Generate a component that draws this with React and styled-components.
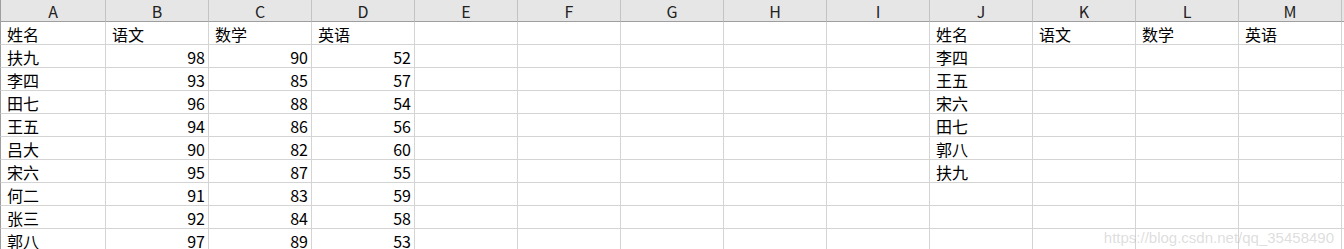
import React from 'react';
import styled, { createGlobalStyle } from 'styled-components';

const GlobalStyle = createGlobalStyle`
  html, body {
    margin: 0;
    padding: 0;
    background: #ffffff;
    overflow: hidden;
  }
  * {
    box-sizing: border-box;
  }
`;

const COLUMNS = ['A', 'B', 'C', 'D', 'E', 'F', 'G', 'H', 'I', 'J', 'K', 'L', 'M', ''];

const scores = [
  ['姓名', '语文', '数学', '英语'],
  ['扶九', 98, 90, 52],
  ['李四', 93, 85, 57],
  ['田七', 96, 88, 54],
  ['王五', 94, 86, 56],
  ['吕大', 90, 82, 60],
  ['宋六', 95, 87, 55],
  ['何二', 91, 83, 59],
  ['张三', 92, 84, 58],
  ['郭八', 97, 89, 53],
];

// lookup table on the right: headers then names to fill in
const lookup = [['姓名', '语文', '数学', '英语'], ['李四'], ['王五'], ['宋六'], ['田七'], ['郭八'], ['扶九']];

const Sheet = styled.div`
  position: relative;
  width: 1344px;
  height: 249px;
  overflow: hidden;
  font-family: 'Noto Sans CJK SC', 'Noto Sans', sans-serif;
  color: #000;
`;

const Grid = styled.div`
  display: grid;
  grid-template-columns: 106px repeat(12, 103px) 1fr;
  grid-auto-rows: 23px;
  grid-template-rows: 22px;
`;

const HeadCell = styled.div`
  display: flex;
  align-items: center;
  justify-content: center;
  background: #e6e6e6;
  border-right: 1px solid #c3c3c3;
  border-bottom: 1px solid #9e9e9e;
  border-left: ${(p) => (p.$first ? '1px solid #9e9e9e' : 'none')};
  font-size: 16px;
  color: #222;
  padding-top: 1px;
`;

const Cell = styled.div`
  display: flex;
  align-items: center;
  justify-content: ${(p) => (p.$num ? 'flex-end' : 'flex-start')};
  padding: 2px ${(p) => (p.$num ? '3px' : '0')} 0 ${(p) => (p.$num ? '0' : '6px')};
  border-right: 1px solid #d4d4d4;
  border-bottom: 1px solid #d4d4d4;
  border-left: ${(p) => (p.$first ? '1px solid #9e9e9e' : 'none')};
  font-size: 16px;
  line-height: 1;
  white-space: nowrap;
  overflow: hidden;
`;

const Watermark = styled.div`
  position: absolute;
  right: 10px;
  bottom: 3px;
  font-family: 'Liberation Sans', Arial, sans-serif;
  font-size: 15px;
  color: rgba(170, 170, 170, 0.4);
  pointer-events: none;
`;

function valueAt(row, col) {
  if (col < 4) {
    const r = scores[row];
    return r ? r[col] : undefined;
  }
  if (col >= 9 && col <= 12) {
    const r = lookup[row];
    return r ? r[col - 9] : undefined;
  }
  return undefined;
}

export default function App() {
  const rows = 10;
  return (
    <Sheet>
      <GlobalStyle />
      <Grid>
        {COLUMNS.map((c, i) => (
          <HeadCell key={`h${i}`} $first={i === 0}>
            {c}
          </HeadCell>
        ))}
        {Array.from({ length: rows }).map((_, r) =>
          COLUMNS.map((_, c) => {
            const v = valueAt(r, c);
            return (
              <Cell key={`${r}-${c}`} $first={c === 0} $num={typeof v === 'number'}>
                {v}
              </Cell>
            );
          })
        )}
      </Grid>
      <Watermark>https://blog.csdn.net/qq_35458490</Watermark>
    </Sheet>
  );
}
